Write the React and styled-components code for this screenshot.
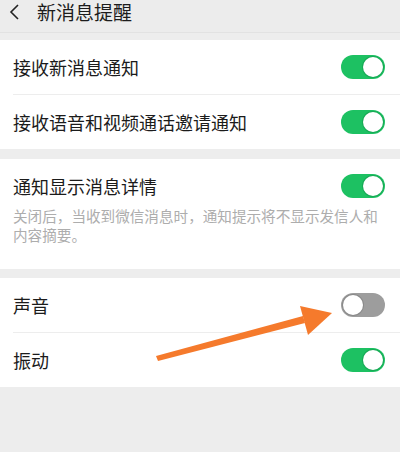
import React from "react";
import styled, { createGlobalStyle } from "styled-components";

const Global = createGlobalStyle`
  html, body { margin: 0; padding: 0; background: #ededed; }
  body { font-family: "Noto Sans CJK SC", "Noto Sans", sans-serif; }
  * { box-sizing: border-box; }
`;

const Page = styled.div`
  position: relative;
  width: 400px;
  height: 452px;
  background: #ededed;
  overflow: hidden;
`;

const Header = styled.div`
  height: 33px;
  display: flex;
  align-items: center;
  padding: 0 0 9px 9px;
  gap: 16px;
  border-bottom: 1px solid #e2e2e2;
  background: #ececec;
`;

const Title = styled.div`
  font-size: 19px;
  color: #1c1c1c;
  line-height: 21px;
`;

const Section = styled.div`
  background: #ffffff;
  margin-top: ${(p) => p.$gap}px;
`;

const Row = styled.div`
  height: 54px;
  display: flex;
  align-items: center;
  justify-content: space-between;
  padding: 0 15px 0 13px;
`;

const Divider = styled.div`
  height: 1px;
  margin-left: 13px;
  background: #ededed;
`;

const Label = styled.div`
  font-size: 18px;
  line-height: 24px;
  color: #1b1b1b;
`;

const DetailBlock = styled.div`
  height: 110px;
  padding: 15px 15px 0 13px;
`;

const DetailTop = styled.div`
  display: flex;
  align-items: center;
  justify-content: space-between;
`;

const Desc = styled.div`
  margin-top: 8px;
  font-size: 14.6px;
  line-height: 19px;
  color: #adadad;
  padding-right: 4px;
`;

const Track = styled.div`
  width: 44px;
  height: 24px;
  border-radius: 12px;
  background: ${(p) => (p.$on ? "#1dc162" : "#9d9d9d")};
  display: flex;
  align-items: center;
  justify-content: ${(p) => (p.$on ? "flex-end" : "flex-start")};
  padding: 0 2px;
  flex-shrink: 0;
`;

const Knob = styled.div`
  width: 20px;
  height: 20px;
  border-radius: 50%;
  background: #ffffff;
  box-shadow: 0 0 0 1px ${(p) => (p.$on ? "#17a955" : "#8a8a8a")};
`;

const ArrowLayer = styled.svg`
  position: absolute;
  left: 0;
  top: 0;
  pointer-events: none;
`;

const Toggle = ({ on }) => (
  <Track $on={on}>
    <Knob $on={on} />
  </Track>
);

export default function App() {
  return (
    <Page>
      <Global />
      <Header>
        <svg width="12" height="18" viewBox="0 0 12 18">
          <polyline points="9,2 2,9 9,16" fill="none" stroke="#222" strokeWidth="1.6" />
        </svg>
        <Title>新消息提醒</Title>
      </Header>

      <Section $gap={7}>
        <Row>
          <Label>接收新消息通知</Label>
          <Toggle on />
        </Row>
        <Divider />
        <Row>
          <Label>接收语音和视频通话邀请通知</Label>
          <Toggle on />
        </Row>
      </Section>

      <Section $gap={10}>
        <DetailBlock>
          <DetailTop>
            <Label>通知显示消息详情</Label>
            <Toggle on />
          </DetailTop>
          <Desc>关闭后，当收到微信消息时，通知提示将不显示发信人和内容摘要。</Desc>
        </DetailBlock>
      </Section>

      <Section $gap={9}>
        <Row>
          <Label>声音</Label>
          <Toggle on={false} />
        </Row>
        <Divider />
        <Row>
          <Label>振动</Label>
          <Toggle on />
        </Row>
      </Section>

      <ArrowLayer width="400" height="452" viewBox="0 0 400 452">
        <polygon points="156,356 158,361 305,323 303,316" fill="#f57a2c" />
        <polygon points="300,306 332,313 308,335" fill="#f57a2c" />
      </ArrowLayer>
    </Page>
  );
}
